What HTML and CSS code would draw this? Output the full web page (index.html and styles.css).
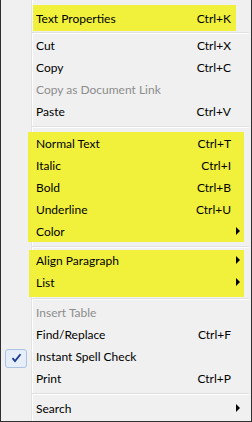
FILE: index.html
```html
<!DOCTYPE html>
<html lang="en">
<head>
    <meta charset="UTF-8">
    <title>Text Context Menu</title>
    <link rel="stylesheet" href="styles.css">
</head>
<body>

<div class="menu">
    <!-- Text Properties -->
    <div class="mark mark-top">
        <div class="item"><span class="icon"></span><span class="label">Text Properties</span><span class="key">Ctrl+K</span><span class="sub"></span></div>
    </div>
    <div class="sep"></div>

    <!-- Clipboard -->
    <div class="item"><span class="icon"></span><span class="label">Cut</span><span class="key">Ctrl+X</span><span class="sub"></span></div>
    <div class="item"><span class="icon"></span><span class="label">Copy</span><span class="key">Ctrl+C</span><span class="sub"></span></div>
    <div class="item disabled"><span class="icon"></span><span class="label">Copy as Document Link</span><span class="key"></span><span class="sub"></span></div>
    <div class="item"><span class="icon"></span><span class="label">Paste</span><span class="key">Ctrl+V</span><span class="sub"></span></div>
    <div class="sep sep-before-mark"></div>

    <!-- Formatting -->
    <div class="mark mark-format">
        <div class="item"><span class="icon"></span><span class="label">Normal Text</span><span class="key">Ctrl+T</span><span class="sub"></span></div>
        <div class="item"><span class="icon"></span><span class="label">Italic</span><span class="key">Ctrl+I</span><span class="sub"></span></div>
        <div class="item"><span class="icon"></span><span class="label">Bold</span><span class="key">Ctrl+B</span><span class="sub"></span></div>
        <div class="item"><span class="icon"></span><span class="label">Underline</span><span class="key">Ctrl+U</span><span class="sub"></span></div>
        <div class="item"><span class="icon"></span><span class="label">Color</span><span class="key"></span><span class="sub"><i class="arrow"></i></span></div>
    </div>
    <div class="sep sep-between-marks"></div>

    <!-- Paragraph -->
    <div class="mark mark-para">
        <div class="item"><span class="icon"></span><span class="label">Align Paragraph</span><span class="key"></span><span class="sub"><i class="arrow"></i></span></div>
        <div class="item"><span class="icon"></span><span class="label">List</span><span class="key"></span><span class="sub"><i class="arrow"></i></span></div>
    </div>
    <div class="sep sep-after-mark"></div>

    <!-- Tools -->
    <div class="item disabled"><span class="icon"></span><span class="label">Insert Table</span><span class="key"></span><span class="sub"></span></div>
    <div class="item"><span class="icon"></span><span class="label">Find/Replace</span><span class="key">Ctrl+F</span><span class="sub"></span></div>
    <div class="item"><span class="icon"><span class="check">
        <svg width="11" height="10" viewBox="0 0 11 10"><path d="M1.5 5.2 L4 8 L9.5 1.2" fill="none" stroke="#1a3a8f" stroke-width="1.8"/></svg>
    </span></span><span class="label">Instant Spell Check</span><span class="key"></span><span class="sub"></span></div>
    <div class="item"><span class="icon"></span><span class="label">Print</span><span class="key">Ctrl+P</span><span class="sub"></span></div>
    <div class="sep sep-last"></div>

    <div class="item"><span class="icon"></span><span class="label">Search</span><span class="key"></span><span class="sub"><i class="arrow"></i></span></div>
</div>

</body>
</html>
```

FILE: styles.css
```css
/* Global */
* {
    margin: 0;
    padding: 0;
    box-sizing: border-box;
}

body {
    background: #f0f0f0;
    font-family: Lato, "Open Sans", sans-serif;
    font-size: 12px;
    color: #000;
}

/* Menu frame with icon gutter */
.menu {
    width: 252px;
    height: 422px;
    padding: 5px 2px 0 0;
    border: 1px solid #2f2f2f;
    border-top: 0;
    background: linear-gradient(to right, #f0f0f0 30px, #e2e3e3 30px, #e2e3e3 31px, #fff 31px, #fff 32px, #f0f0f0 32px);
}

/* Rows */
.item {
    display: grid;
    grid-template-columns: 31px 1fr auto 18px;
    align-items: center;
    height: 22px;
}

.icon {
    display: flex;
    align-items: center;
    height: 22px;
}

.label {
    padding-left: 4px;
    white-space: nowrap;
}

.key {
    text-align: right;
}

.disabled {
    color: #8d8d8d;
}

.arrow {
    display: block;
    width: 0;
    height: 0;
    margin-left: 5px;
    border-left: 4px solid #000;
    border-top: 4px solid transparent;
    border-bottom: 4px solid transparent;
}

.check {
    display: flex;
    align-items: center;
    justify-content: center;
    width: 22px;
    height: 19px;
    margin: 4px 0 0 4px;
    border: 1px solid #aac2e4;
    border-radius: 3px;
    background: #e6eef9;
}

/* Separators */
.sep {
    height: 2px;
    margin: 1px 0 0 31px;
    border-top: 1px solid #e0e0e0;
    border-bottom: 1px solid #fff;
}

.sep-before-mark {
    margin-top: 4px;
    margin-bottom: 4px;
}

.sep-between-marks {
    margin-top: 4px;
    margin-bottom: 1px;
}

.sep-after-mark {
    margin-top: 1px;
    margin-bottom: 1px;
}

.sep-last {
    margin-top: 4px;
    margin-bottom: 2px;
}

/* Yellow annotation marks */
.mark {
    background-repeat: no-repeat;
    background-image: linear-gradient(#f1f13b, #f1f13b);
}

.mark-top {
    padding: 2px 0;
    background-position: 32px 0;
    background-size: 203px 100%;
}

.mark-format {
    background-position: 27px 0;
    background-size: 216px 100%;
}

.mark-para {
    padding-bottom: 4px;
    background-position: 28px 1px;
    background-size: 215px 100%;
}
```
